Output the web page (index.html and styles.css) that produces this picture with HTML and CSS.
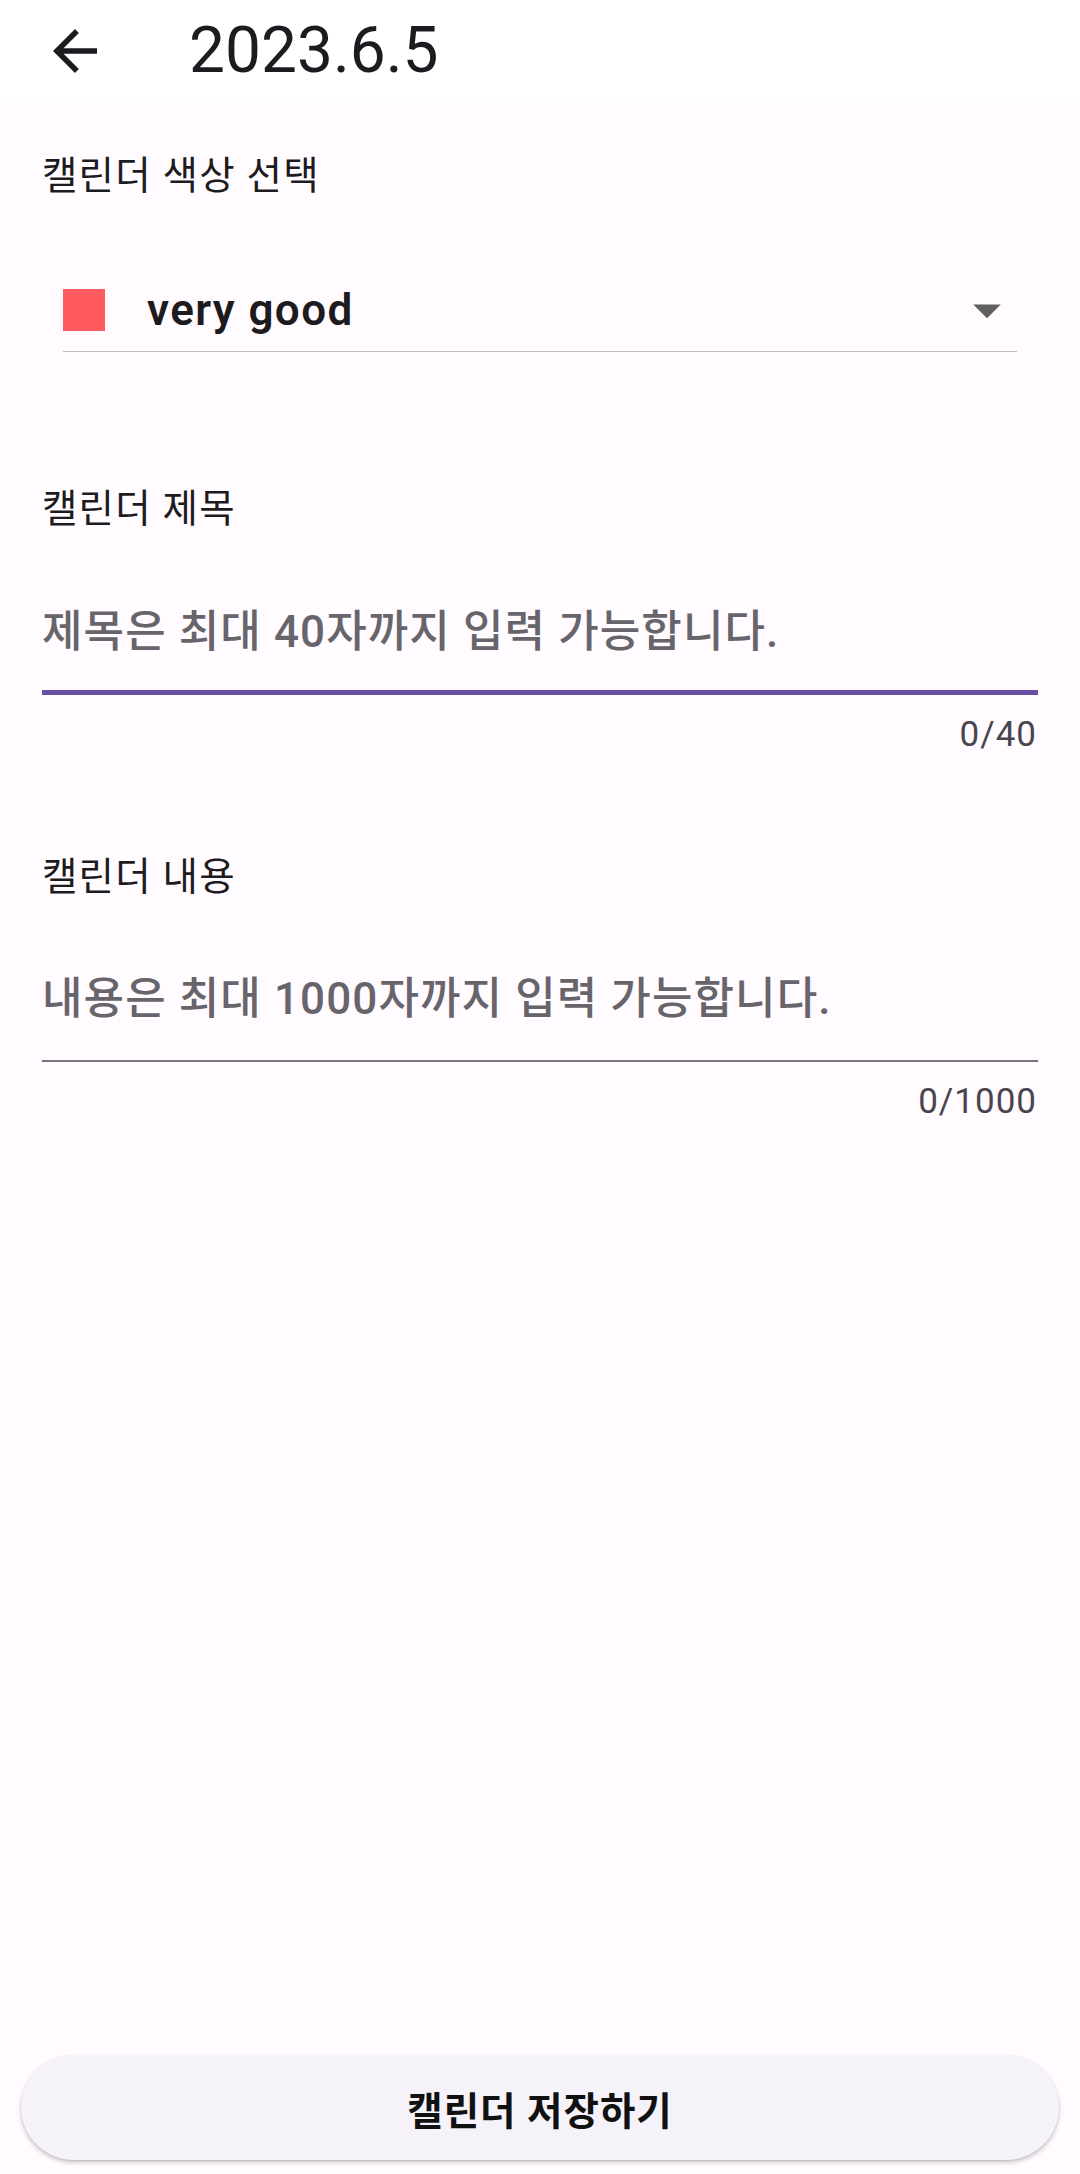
FILE: index.html
```html
<!DOCTYPE html>
<html lang="ko">
<head>
<meta charset="utf-8">
<title>2023.6.5</title>
<link rel="stylesheet" href="styles.css">
</head>
<body>
  <header class="appbar">
    <span class="back">
      <svg viewBox="0 0 24 24" width="66" height="66"><path fill="#1D1B20" d="M20 11H7.83l5.59-5.59L12 4l-8 8 8 8 1.41-1.41L7.83 13H20v-2z"/></svg>
    </span>
    <h1 class="title">2023.6.5</h1>
  </header>

  <main class="content">
    <p class="label label-first">캘린더 색상 선택</p>
    <div class="dropdown">
      <span class="swatch"></span>
      <span class="dropdown-text">very good</span>
      <span class="dropdown-arrow">
        <svg viewBox="0 0 24 24" width="66" height="66"><path fill="#5f5f5f" d="M7 10l5 5 5-5z"/></svg>
      </span>
    </div>

    <p class="label label-title">캘린더 제목</p>
    <div class="input input-focused">
      <span class="placeholder">제목은 최대 40자까지 입력 가능합니다.</span>
    </div>
    <p class="counter counter-focused">0/40</p>

    <p class="label label-body">캘린더 내용</p>
    <div class="input input-idle">
      <span class="placeholder">내용은 최대 1000자까지 입력 가능합니다.</span>
    </div>
    <p class="counter counter-idle">0/1000</p>
  </main>

  <button class="save">캘린더 저장하기</button>
</body>
</html>
```

FILE: styles.css
```css
* {
  box-sizing: border-box;
  margin: 0;
  padding: 0;
}

html, body {
  height: 100%;
}

body {
  min-height: 2174px;
  background: #FFFBFE;
  font-family: Roboto, "Noto Sans CJK KR", sans-serif;
  color: #1D1B20;
  display: flex;
  flex-direction: column;
}

.appbar {
  height: 102px;
  background: #FFFFFF;
  display: flex;
  align-items: center;
  flex-shrink: 0;
}

.back {
  width: 66px;
  height: 66px;
  margin-left: 42px;
  display: flex;
}

.title {
  margin-left: 81px;
  font-size: 64px;
  font-weight: 400;
  line-height: 80px;
  color: #1D1B20;
}

.content {
  padding: 0 42px;
  display: flex;
  flex-direction: column;
}

.label {
  font-size: 38.5px;
  line-height: 48px;
  letter-spacing: 1.2px;
  color: #1D1B20;
}

.label-first { margin-top: 50px; }
.label-title { margin-top: 133px; }
.label-body { margin-top: 96.5px; }

.dropdown {
  margin: 68px 21px 0;
  height: 84px;
  border-bottom: 1px solid #BDBDBD;
  display: flex;
  align-items: center;
}

.swatch {
  width: 42px;
  height: 42px;
  background: #FF5A5F;
  flex-shrink: 0;
}

.dropdown-text {
  margin-left: 42px;
  font-size: 44px;
  font-weight: 600;
  letter-spacing: 1.4px;
  color: #1D1B20;
}

.dropdown-arrow {
  margin-left: auto;
  margin-right: -3px;
  width: 66px;
  height: 66px;
  display: flex;
}

.input {
  display: flex;
  align-items: center;
}

.input-focused {
  padding: 68.5px 0 28.5px;
  border-bottom: 5.5px solid #6750A4;
}

.input-idle {
  padding: 67.5px 0 31px;
  border-bottom: 2.75px solid #79747E;
}

.placeholder {
  font-size: 44px;
  line-height: 60px;
  font-weight: 500;
  letter-spacing: 1.1px;
  color: #67646B;
}

.counter {
  font-size: 35px;
  line-height: 44px;
  letter-spacing: 1px;
  text-align: right;
  padding-right: 1px;
  color: #49454F;
}

.counter-focused { margin-top: 17.5px; }
.counter-idle { margin-top: 18.75px; }

.save {
  margin: auto 21px 14px;
  height: 105px;
  border: none;
  border-radius: 53px;
  background: #F6F2F9;
  box-shadow: 0 2.75px 5px rgba(0, 0, 0, 0.18), 0 1px 2px rgba(0, 0, 0, 0.12);
  font-family: Roboto, "Noto Sans CJK KR", sans-serif;
  font-size: 38.5px;
  font-weight: 700;
  letter-spacing: 1px;
  color: #111111;
  flex-shrink: 0;
}
```
